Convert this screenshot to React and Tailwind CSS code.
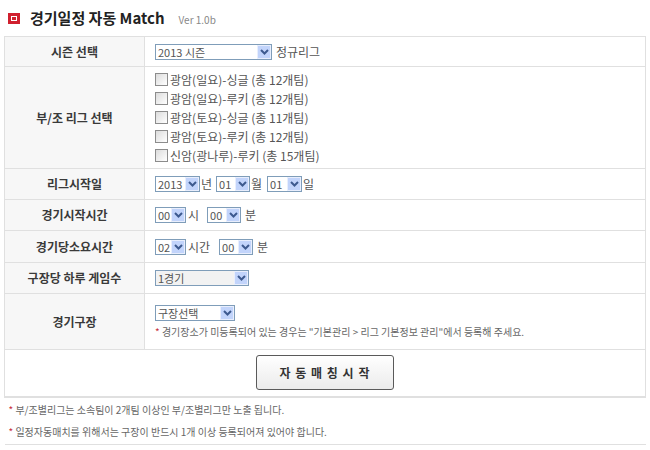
import React from 'react';

const font = { fontFamily: '"Noto Sans CJK KR", "Noto Sans", sans-serif' };

const Chevron = () => (
  <svg width="9" height="6" viewBox="0 0 9 6">
    <path d="M1 1 L4.5 4.5 L8 1" fill="none" stroke="#3d5a8f" strokeWidth="2" />
  </svg>
);

const Select = ({ value, width, bg = 'bg-white' }) => (
  <span className={`inline-flex items-stretch h-[16px] border border-[#7f9db9] ${bg} ${width}`}>
    <span className="flex-1 pl-[2px] text-[11px] leading-[14px] text-[#555] whitespace-nowrap">{value}</span>
    <span className="w-[14px] flex items-center justify-center bg-[#c2d4fb] border border-[#e8eefd]">
      <Chevron />
    </span>
  </span>
);

const Check = ({ label }) => (
  <label className="flex items-center h-[19px] gap-[2px] text-[12px] text-[#555]">
    <span className="w-[13px] h-[13px] border border-[#8c8c8c] bg-gradient-to-br from-[#dcdcdc] to-white" />
    <span>{label}</span>
  </label>
);

const Row = ({ label, h, children }) => (
  <tr className={h}>
    <th className="w-[140px] bg-[#f7f7f7] border border-[#e0e0e0] text-[12px] font-bold text-[#3a3a3a] text-center">
      {label}
    </th>
    <td className="border border-[#e0e0e0] pl-[10px] text-[12px] text-[#555]">{children}</td>
  </tr>
);

const leagues = [
  '광암(일요)-싱글 (총 12개팀)',
  '광암(일요)-루키 (총 12개팀)',
  '광암(토요)-싱글 (총 11개팀)',
  '광암(토요)-루키 (총 12개팀)',
  '신암(광나루)-루키 (총 15개팀)',
];

export default function App() {
  return (
    <div className="w-[650px] h-[450px] bg-white px-[4px]" style={font}>
      {/* title */}
      <div className="flex items-center h-[36px] pl-[4px]">
        <span className="w-[12px] h-[11px] bg-[#d0202e] flex items-center justify-center">
          <span className="w-[6px] h-[5px] border border-white" />
        </span>
        <span className="ml-[10px] text-[15px] font-bold text-[#222]">경기일정 자동 Match</span>
        <span className="ml-[14px] text-[10px] text-[#888] mt-[3px]">Ver 1.0b</span>
      </div>

      <table className="w-[642px] border-collapse">
        <tbody>
          <Row label="시즌 선택" h="h-[30px]">
            <div className="flex items-center gap-[4px]">
              <Select value="2013 시즌" width="w-[117px]" />
              <span>정규리그</span>
            </div>
          </Row>
          <Row label="부/조 리그 선택" h="h-[102px]">
            <div className="flex flex-col">
              {leagues.map((l) => (
                <Check key={l} label={l} />
              ))}
            </div>
          </Row>
          <Row label="리그시작일" h="h-[31px]">
            <div className="flex items-center">
              <Select value="2013" width="w-[45px]" />
              <span className="ml-[1px] mr-[4px]">년</span>
              <Select value="01" width="w-[34px]" />
              <span className="ml-[1px] mr-[5px]">월</span>
              <Select value="01" width="w-[35px]" />
              <span className="ml-[1px]">일</span>
            </div>
          </Row>
          <Row label="경기시작시간" h="h-[31px]">
            <div className="flex items-center">
              <Select value="00" width="w-[31px]" />
              <span className="ml-[2px] mr-[8px]">시</span>
              <Select value="00" width="w-[34px]" />
              <span className="ml-[4px]">분</span>
            </div>
          </Row>
          <Row label="경기당소요시간" h="h-[32px]">
            <div className="flex items-center">
              <Select value="02" width="w-[31px]" />
              <span className="ml-[2px] mr-[9px]">시간</span>
              <Select value="00" width="w-[34px]" />
              <span className="ml-[4px]">분</span>
            </div>
          </Row>
          <Row label="구장당 하루 게임수" h="h-[31px]">
            <Select value="1경기" width="w-[94px]" bg="bg-[#f2f2f2]" />
          </Row>
          <Row label="경기구장" h="h-[56px]">
            <div className="flex flex-col gap-[3px]">
              <Select value="구장선택" width="w-[80px]" />
              <span className="text-[10px] text-[#666]">
                <span className="text-[#c8303c]">*</span> 경기장소가 미등록되어 있는 경우는 "기본관리 &gt; 리그 기본정보 관리"에서 등록해 주세요.
              </span>
            </div>
          </Row>
          <tr className="h-[47px]">
            <td colSpan={2} className="border border-[#e0e0e0] border-b-2 text-center">
              <button className="w-[138px] h-[35px] border border-[#5a5a5a] rounded-[3px] bg-gradient-to-b from-white to-[#ebebeb] text-[12px] font-bold text-[#333] tracking-[1px]">
                자 동 매 칭 시 작
              </button>
            </td>
          </tr>
          <tr className="h-[48px]">
            <td colSpan={2} className="border-b border-[#e0e0e0] pl-[4px] text-[10px] text-[#666] leading-[22px]">
              <div>
                <span className="text-[#c8303c]">*</span> 부/조별리그는 소속팀이 2개팀 이상인 부/조별리그만 노출 됩니다.
              </div>
              <div>
                <span className="text-[#c8303c]">*</span> 일정자동매치를 위해서는 구장이 반드시 1개 이상 등록되어져 있어야 합니다.
              </div>
            </td>
          </tr>
        </tbody>
      </table>
    </div>
  );
}
